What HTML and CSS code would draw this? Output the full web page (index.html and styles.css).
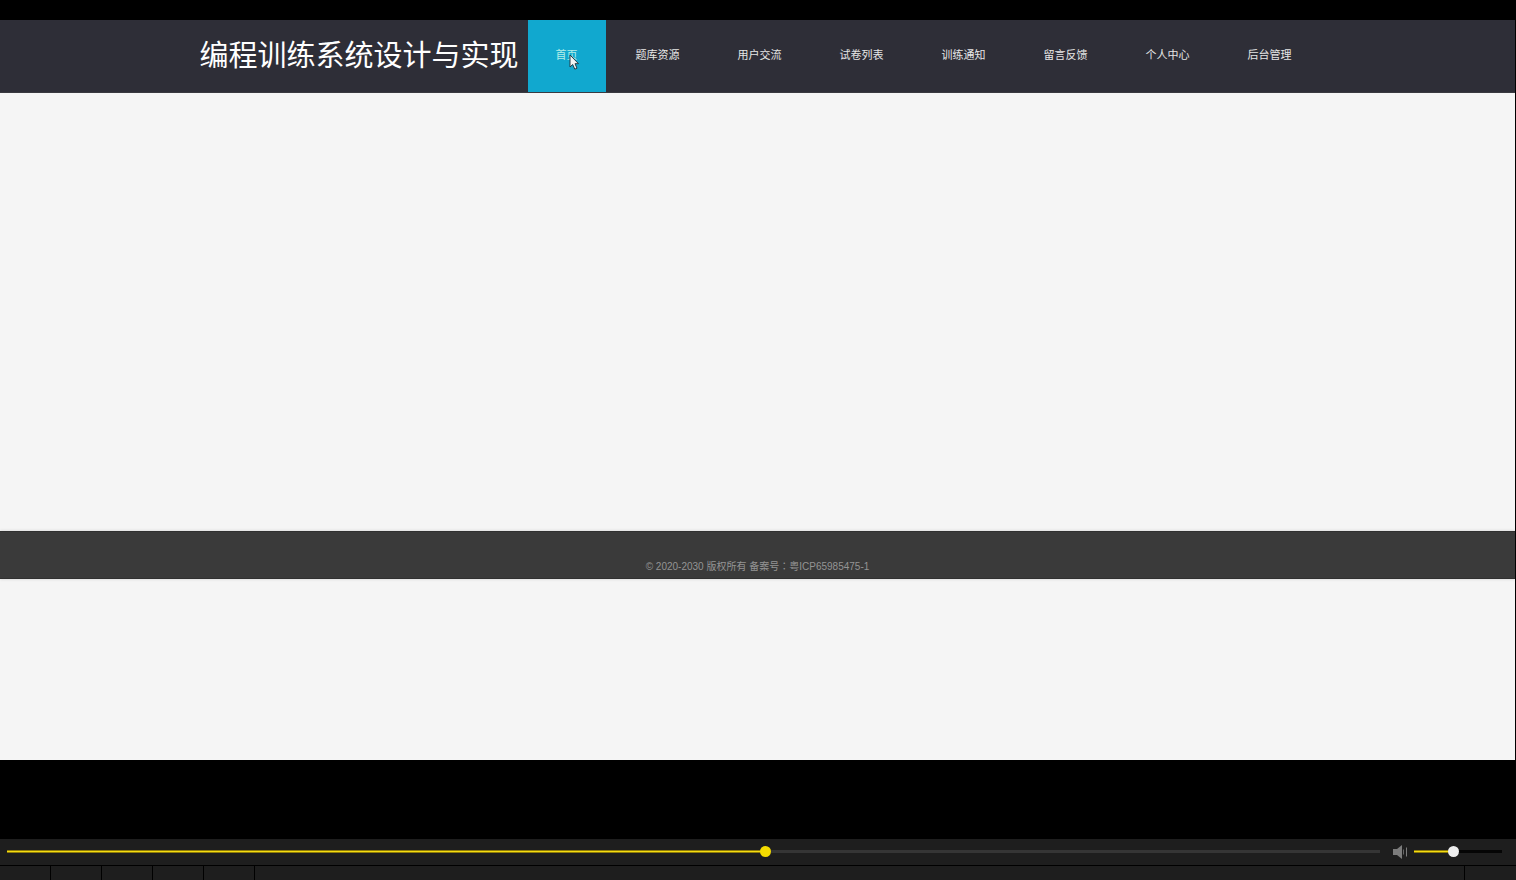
FILE: index.html
```
<!DOCTYPE html>
<html lang="zh-CN">
<head>
    <meta charset="UTF-8">
    <meta name="viewport" content="width=device-width, initial-scale=1.0">
    <title>编程训练系统设计与实现</title>
    <link rel="stylesheet" href="styles.css">
</head>
<body>
    <div class="video">
        <header class="header">
            <h1 class="logo">编程训练系统设计与实现</h1>
            <nav class="nav">
                <a class="nav-link active" href="#">首页
                    <svg class="cursor" width="10" height="17" viewBox="0 0 10 17">
                        <path d="M1 1v12l2.700-2.500 2.100 4.700 2.200-1-2-4.500h3.500z" fill="#f4f4f4" stroke="#243c48" stroke-width="1"/>
                    </svg>
                </a>
                <a class="nav-link" href="#">题库资源</a>
                <a class="nav-link" href="#">用户交流</a>
                <a class="nav-link" href="#">试卷列表</a>
                <a class="nav-link" href="#">训练通知</a>
                <a class="nav-link" href="#">留言反馈</a>
                <a class="nav-link" href="#">个人中心</a>
                <a class="nav-link" href="#">后台管理</a>
            </nav>
        </header>
        <main class="content"></main>
        <footer class="footer" lang="zh-TW">© 2020-2030 版权所有 备案号：粤ICP65985475-1</footer>
        <div class="blank"></div>
    </div>

    <div class="player">
        <div class="seek-row">
            <input class="slider seek" type="range" min="0" max="1000" value="553" aria-label="播放进度" style="--fill: 55.3%">
            <svg class="speaker" width="15" height="14" viewBox="0 0 15 14">
                <path d="M0 4h4l5-4v14l-5-4H0z" fill="#7c7c7c"/>
                <path d="M10.500 4.500v5" stroke="#666" stroke-width="1"/>
                <path d="M13.500 2.500v9" stroke="#7c7c7c" stroke-width="1"/>
            </svg>
            <input class="slider volume" type="range" min="0" max="1000" value="442" aria-label="音量" style="--fill: 44.2%">
        </div>
        <div class="button-row">
            <div class="cell"></div>
            <div class="cell"></div>
            <div class="cell"></div>
            <div class="cell"></div>
            <div class="cell"></div>
            <div class="cell wide"></div>
            <div class="cell last"></div>
        </div>
    </div>
</body>
</html>
```

FILE: styles.css
```
* {
    box-sizing: border-box;
    margin: 0;
    padding: 0;
}

body {
    min-height: 100vh;
    display: flex;
    flex-direction: column;
    background-color: #000;
    font-family: "Liberation Sans", "Noto Sans CJK SC", sans-serif;
}

.video {
    flex: 1;
    display: flex;
    flex-direction: column;
    margin: 20px 1px 79px 0;
    overflow: hidden;
    background-color: #f5f5f5;
}

/* Site header */
.header {
    display: flex;
    justify-content: center;
    padding-left: 4px;
    background-color: #2e2e37;
    border-bottom: 1px solid #3a3a40;
}

.logo {
    padding-right: 9px;
    color: #fff;
    font-size: 29px;
    font-weight: normal;
    line-height: 72px;
    white-space: nowrap;
}

.nav {
    display: flex;
    gap: 2px;
}

.nav-link {
    position: relative;
    padding: 0 28px 2px;
    color: #e6e6e6;
    font-size: 11px;
    line-height: 70px;
    text-decoration: none;
    white-space: nowrap;
}

.nav-link.active {
    background-color: #11a8cf;
    color: #b4eee8;
}

.cursor {
    position: absolute;
    top: 34px;
    left: 41px;
}

/* Page body */
.content {
    flex: 437;
}

.footer {
    padding: 28px 0 4px;
    border-top: 1px solid #303030;
    border-bottom: 1px solid #303030;
    box-shadow: 0 0 3px #ccc;
    background-color: #3a3a3a;
    color: #949494;
    font-family: "Liberation Sans", "Noto Sans CJK TC", sans-serif;
    font-size: 10px;
    line-height: 14px;
    text-align: center;
}

.blank {
    flex: 181;
}

/* Player controls */
.player {
    height: 41px;
    display: flex;
    flex-direction: column;
    background-color: #1e1e1e;
}

.seek-row {
    height: 26px;
    display: flex;
    align-items: center;
    padding: 0 14px 1px 7px;
}

.slider {
    appearance: none;
    -webkit-appearance: none;
    height: 11px;
    background: transparent;
    cursor: pointer;
}

.slider::-webkit-slider-runnable-track {
    height: 3px;
    background: linear-gradient(to right, transparent var(--fill), var(--rest) var(--fill)),
                linear-gradient(#8f7c08, #8f7c08 1px, #f5dc10 1px, #f5dc10 2px, #8f7c08 2px);
}

.slider::-webkit-slider-thumb {
    -webkit-appearance: none;
    width: 11px;
    height: 11px;
    margin-top: -4px;
    border-radius: 50%;
    background-color: var(--thumb);
}

.seek {
    --rest: #353535;
    --thumb: #f5dc00;
    flex: 1;
    min-width: 0;
}

.speaker {
    margin: 0 6px 0 13px;
}

.volume {
    --rest: #050505;
    --thumb: #eee;
    width: 88px;
}

.button-row {
    flex: 1;
    display: flex;
    gap: 1px;
    border-top: 1px solid #000;
    background-color: #000;
}

.cell {
    width: 50px;
    background-color: #1e1e1e;
}

.cell.wide {
    flex: 1;
}

.cell.last {
    width: 51px;
}
```
